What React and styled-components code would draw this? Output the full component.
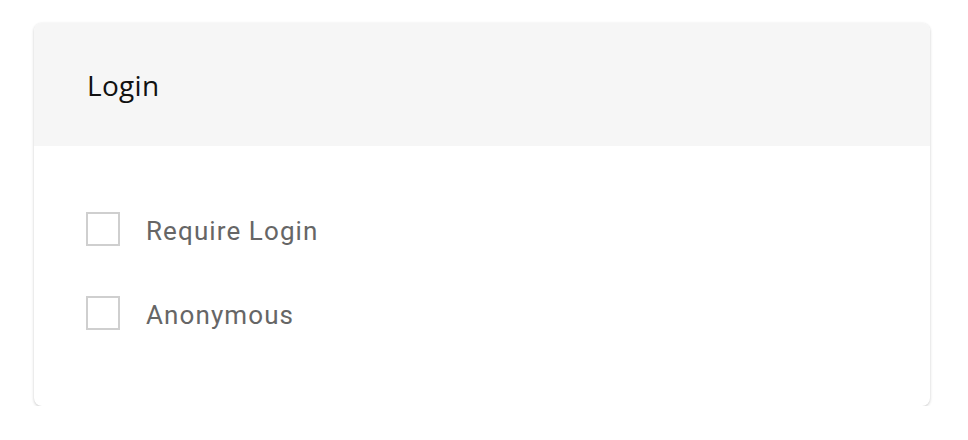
import React from 'react';
import styled, { createGlobalStyle } from 'styled-components';

const GlobalStyle = createGlobalStyle`
  body {
    margin: 0;
    background: #fff;
    font-family: Roboto, "Liberation Sans", sans-serif;
  }
`;

const Page = styled.div`
  padding: 23px 38px 0 34px;
`;

const Card = styled.section`
  background: #fff;
  border-radius: 8px;
  box-shadow: 0 1px 3px rgba(0, 0, 0, 0.22);
  overflow: hidden;
  height: 383px;
`;

const CardHeader = styled.header`
  background: #f6f6f6;
  height: 123px;
  display: flex;
  align-items: center;
  padding-left: 53px;
`;

const Title = styled.h2`
  margin: 0;
  font-family: "Open Sans", "Noto Sans", sans-serif;
  font-size: 28px;
  font-weight: 400;
  letter-spacing: 0.3px;
  color: #111;
`;

const CardBody = styled.div`
  display: flex;
  flex-direction: column;
  gap: 50px;
  padding: 66px 52px 0;
`;

const Option = styled.label`
  display: flex;
  align-items: center;
  gap: 26px;
  height: 34px;
  cursor: pointer;
`;

const Box = styled.input.attrs({ type: 'checkbox' })`
  appearance: none;
  margin: 0;
  width: 34px;
  height: 34px;
  border: 2px solid #cfcfcf;
  background: #fff;
  box-sizing: border-box;
`;

const Label = styled.span`
  font-size: 26px;
  letter-spacing: 1.1px;
  color: #666;
  line-height: 30px;
  padding-top: 4px;
`;

const options = ['Require Login', 'Anonymous'];

const App = () => {
  return (
    <>
      <GlobalStyle />
      <Page>
        <Card>
          <CardHeader>
            <Title>Login</Title>
          </CardHeader>
          <CardBody>
            {options.map((o) => (
              <Option key={o}>
                <Box />
                <Label>{o}</Label>
              </Option>
            ))}
          </CardBody>
        </Card>
      </Page>
    </>
  );
};

export default App;
